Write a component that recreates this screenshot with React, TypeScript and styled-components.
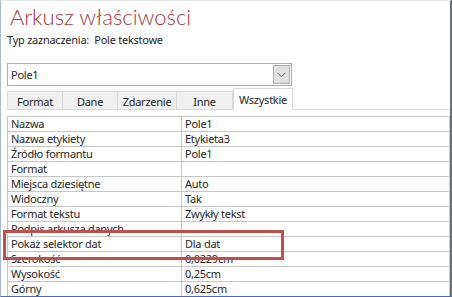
import React from "react";
import styled, { createGlobalStyle } from "styled-components";

const GlobalStyle = createGlobalStyle`
  html, body {
    margin: 0;
    padding: 0;
    background: #ffffff;
    overflow: hidden;
  }
  body {
    font-family: "Noto Sans", "Open Sans", sans-serif;
  }
`;

type Row = { name: string; value: string };

const rows: Row[] = [
	{ name: "Nazwa", value: "Pole1" },
	{ name: "Nazwa etykiety", value: "Etykieta3" },
	{ name: "Źródło formantu", value: "Pole1" },
	{ name: "Format", value: "" },
	{ name: "Miejsca dziesiętne", value: "Auto" },
	{ name: "Widoczny", value: "Tak" },
	{ name: "Format tekstu", value: "Zwykły tekst" },
	{ name: "Podpis arkusza danych", value: "" },
	{ name: "Pokaż selektor dat", value: "Dla dat" },
	{ name: "Szerokość", value: "0,0229cm" },
	{ name: "Wysokość", value: "0,25cm" },
	{ name: "Górny", value: "0,625cm" },
];

const tabs = ["Format", "Dane", "Zdarzenie", "Inne", "Wszystkie"];
const tabWidths = [56, 55, 59, 56, 60];

const Frame = styled.div`
  position: relative;
  width: 452px;
  height: 297px;
  box-sizing: border-box;
  border-top: 1px solid #e4e6ea;
  border-left: 1px solid #a9b9d6;
  border-right: 2px solid #6b6f78;
  border-bottom: 1px solid #4a6db0;
  padding: 4px 0 0 6px;
  overflow: hidden;
  color: #262626;
  font-size: 11px;
  letter-spacing: -0.25px;
`;

const Title = styled.h1`
  margin: 0 0 0 3px;
  font-family: "Lato", "Open Sans", sans-serif;
  font-weight: 300;
  font-size: 22px;
  line-height: 24px;
  color: #a4373a;
  letter-spacing: 0;
`;

const Selection = styled.div`
  margin-top: 3px;
  line-height: 15px;
  white-space: pre;
`;

const Combo = styled.div`
  margin-top: 16px;
  width: 285px;
  height: 23px;
  box-sizing: border-box;
  border: 1px solid #abadb3;
  display: flex;
  align-items: center;
  justify-content: space-between;
  padding: 1px 1px 1px 3px;
`;

const ComboButton = styled.div`
  width: 17px;
  height: 19px;
  box-sizing: border-box;
  border: 1px solid #adadad;
  background: #e1e1e1;
  display: flex;
  align-items: center;
  justify-content: center;
`;

const TabBar = styled.div`
  height: 23px;
  display: flex;
  align-items: flex-end;
  border-bottom: 1px solid #d9d9d9;
`;

const Tab = styled.div<{ $active?: boolean; $w: number }>`
  width: ${(p) => p.$w}px;
  height: ${(p) => (p.$active ? 22 : 18)}px;
  box-sizing: border-box;
  border: 1px solid #d9d9d9;
  border-left-width: ${(p) => (p.$active ? 1 : 0)}px;
  border-bottom: none;
  background: ${(p) => (p.$active ? "#ffffff" : "#f0f0f0")};
  margin-bottom: ${(p) => (p.$active ? -1 : 0)}px;
  display: flex;
  align-items: ${(p) => (p.$active ? "flex-start" : "center")};
  padding-top: ${(p) => (p.$active ? 3 : 1)}px;
  justify-content: center;
  &:first-child {
    border-left-width: 1px;
  }
`;

const Grid = styled.div`
  margin-top: 6px;
  border-top: 1px solid #c6c6c6;
  border-left: 1px solid #c6c6c6;
  display: grid;
  grid-template-columns: 174px 1fr;
`;

const Cell = styled.div`
  height: 15px;
  box-sizing: border-box;
  border-right: 1px solid #c6c6c6;
  border-bottom: 1px solid #c6c6c6;
  padding-left: 3px;
  line-height: 14px;
  white-space: nowrap;
  overflow: hidden;
`;

const Highlight = styled.div`
  position: absolute;
  left: 2px;
  top: 229px;
  width: 281px;
  height: 30px;
  box-sizing: border-box;
  border: 3px solid #c0504d;
  pointer-events: none;
`;

export default function App() {
	return (
		<>
			<GlobalStyle />
			<Frame>
				<Title>Arkusz właściwości</Title>
				<Selection>{"Typ zaznaczenia:  Pole tekstowe"}</Selection>
				<Combo>
					<span>Pole1</span>
					<ComboButton>
						<svg width="9" height="6" viewBox="0 0 9 6">
							<path d="M0.5 0.8 L4.5 4.8 L8.5 0.8" fill="none" stroke="#606060" strokeWidth="1" />
						</svg>
					</ComboButton>
				</Combo>
				<TabBar>
					{tabs.map((t, i) => (
						<Tab key={t} $w={tabWidths[i]} $active={i === tabs.length - 1}>
							{t}
						</Tab>
					))}
				</TabBar>
				<Grid>
					{rows.map((r) => (
						<React.Fragment key={r.name}>
							<Cell>{r.name}</Cell>
							<Cell>{r.value}</Cell>
						</React.Fragment>
					))}
				</Grid>
				<Highlight />
			</Frame>
		</>
	);
}
